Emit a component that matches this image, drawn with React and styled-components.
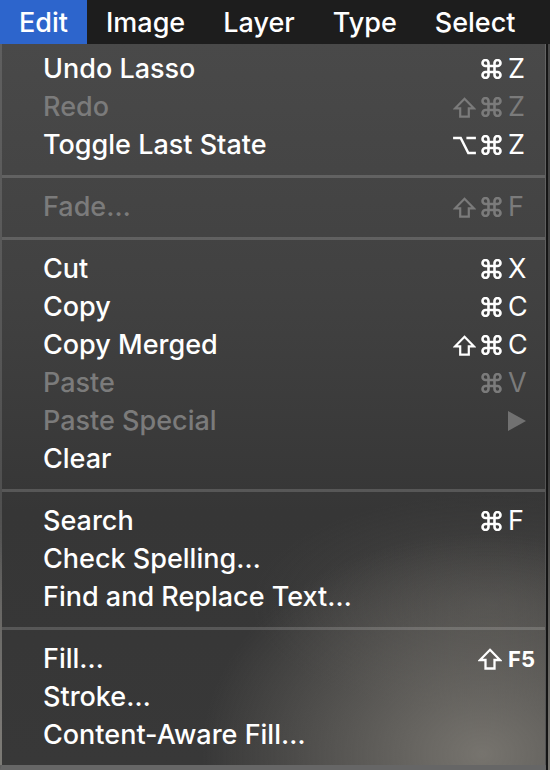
import styled, { createGlobalStyle } from 'styled-components';

const GlobalStyle = createGlobalStyle`
    html, body {
        margin: 0;
        padding: 0;
        background: #3a3a3a;
    }
    body {
        font-family: Inter, "Noto Sans", "DejaVu Sans", sans-serif;
        -webkit-font-smoothing: antialiased;
    }
`;

const Screen = styled.div`
    width: 550px;
    height: 770px;
    overflow: hidden;
    display: flex;
    flex-direction: column;
    background: linear-gradient(180deg, #4a4a4a 0%, #3a3a3a 60%, #7a7873 100%);
`;

const MenuBar = styled.div`
    display: flex;
    height: 44px;
    flex-shrink: 0;
    background: #1d1d1d;
`;

const MenuTitle = styled.div`
    display: flex;
    align-items: center;
    padding: 0 19px;
    font-size: 27px;
    font-weight: 500;
    color: #ffffff;
    white-space: nowrap;
    background: ${p => (p.$active ? '#2d65cc' : 'transparent')};
`;

const Dropdown = styled.div`
    box-sizing: border-box;
    width: 546px;
    flex: 1;
    padding: 6px 0 11px;
    border-left: 2px solid rgba(255, 255, 255, 0.12);
    border-right: 1px solid rgba(255, 255, 255, 0.14);
    border-bottom: 5px solid rgba(255, 255, 255, 0.16);
    box-shadow: 2px 0 0 #151515;
    background:
        radial-gradient(ellipse 280px 220px at 480px 710px, rgba(122, 119, 113, 0.95), rgba(122, 119, 113, 0) 100%),
        radial-gradient(ellipse 240px 110px at 490px 560px, rgba(90, 88, 85, 0.45), rgba(90, 88, 85, 0) 100%),
        linear-gradient(180deg, #494949 0%, #414141 35%, #363636 65%, #383838 100%);
`;

const Row = styled.div`
    display: flex;
    align-items: center;
    height: 38px;
    line-height: 38px;
    padding: 0 13px 0 41px;
    font-size: 27px;
    font-weight: 500;
    color: ${p => (p.$disabled ? '#7b7b7b' : '#ffffff')};
`;

const Label = styled.span`
    flex: 1;
    white-space: nowrap;
`;

const Shortcut = styled.div`
    display: flex;
    align-items: center;
`;

const Mods = styled.div`
    display: flex;
    align-items: center;
    gap: 5px;
`;

const KeyCap = styled.span`
    display: flex;
    align-items: center;
    width: 24px;
    margin-left: 6px;
    font-size: ${p => (p.$bold ? '22px' : '27px')};
    font-weight: ${p => (p.$bold ? 700 : 400)};
`;

const Separator = styled.div`
    height: 24px;
    display: flex;
    align-items: center;
    &::after {
        content: '';
        flex: 1;
        height: 3px;
        background: rgba(255, 255, 255, 0.16);
    }
`;

const CmdIcon = () => (
    <svg width="21" height="20" viewBox="1.5 2 21 20" fill="none" stroke="currentColor" strokeWidth="2.6">
        <path d="M15 6v12a3 3 0 1 0 3-3H6a3 3 0 1 0 3 3V6a3 3 0 1 0-3 3h12a3 3 0 1 0-3-3" />
    </svg>
);

const ShiftIcon = ({ big }) => (
    <svg width={big ? 24 : 23} height={big ? 22 : 21} viewBox="0 0 24 22" fill="none" stroke="currentColor" strokeWidth="2.3" strokeLinejoin="miter">
        <polygon points="12,1.8 22,12 16.5,12 16.5,20.5 7.5,20.5 7.5,12 2,12" />
    </svg>
);

const OptIcon = () => (
    <svg width="23" height="19" viewBox="0 0 24 20" fill="none" stroke="currentColor" strokeWidth="2.6">
        <path d="M0 2H8L16 18H24M14 2H24" />
    </svg>
);

const Arrow = () => (
    <svg width="18" height="20" viewBox="0 0 18 20">
        <polygon points="0,0 18,10 0,20" fill="currentColor" opacity="0.85" />
    </svg>
);

const titles = ['Edit', 'Image', 'Layer', 'Type', 'Select', 'Filter'];

const groups = [
    [
        { label: 'Undo Lasso', mods: ['cmd'], key: 'Z' },
        { label: 'Redo', mods: ['shift', 'cmd'], key: 'Z', disabled: true },
        { label: 'Toggle Last State', mods: ['opt', 'cmd'], key: 'Z' },
    ],
    [{ label: 'Fade…', mods: ['shift', 'cmd'], key: 'F', disabled: true }],
    [
        { label: 'Cut', mods: ['cmd'], key: 'X' },
        { label: 'Copy', mods: ['cmd'], key: 'C' },
        { label: 'Copy Merged', mods: ['shift', 'cmd'], key: 'C' },
        { label: 'Paste', mods: ['cmd'], key: 'V', disabled: true },
        { label: 'Paste Special', submenu: true, disabled: true },
        { label: 'Clear' },
    ],
    [
        { label: 'Search', mods: ['cmd'], key: 'F' },
        { label: 'Check Spelling…' },
        { label: 'Find and Replace Text…' },
    ],
    [
        { label: 'Fill…', mods: ['bigshift'], key: 'F5', bold: true },
        { label: 'Stroke…' },
        { label: 'Content-Aware Fill…' },
    ],
];

const ModIcon = ({ name }) => {
    if (name === 'cmd') return <CmdIcon />;
    if (name === 'opt') return <OptIcon />;
    if (name === 'bigshift') return <ShiftIcon big />;
    return <ShiftIcon />;
};

const MenuRow = ({ item }) => (
    <Row $disabled={item.disabled}>
        <Label>{item.label}</Label>
        {(item.key || item.submenu) && (
            <Shortcut>
                <Mods>
                    {(item.mods || []).map(m => <ModIcon key={m} name={m} />)}
                </Mods>
                <KeyCap $bold={item.bold}>{item.submenu ? <Arrow /> : item.key}</KeyCap>
            </Shortcut>
        )}
    </Row>
);

export default function App() {
    return (
        <Screen>
            <GlobalStyle />
            <MenuBar>
                {titles.map((t, i) => (
                    <MenuTitle key={t} $active={i === 0}>{t}</MenuTitle>
                ))}
            </MenuBar>
            <Dropdown>
                {groups.map((g, gi) => (
                    <div key={gi}>
                        {gi > 0 && <Separator />}
                        {g.map(item => <MenuRow key={item.label} item={item} />)}
                    </div>
                ))}
            </Dropdown>
        </Screen>
    );
}
